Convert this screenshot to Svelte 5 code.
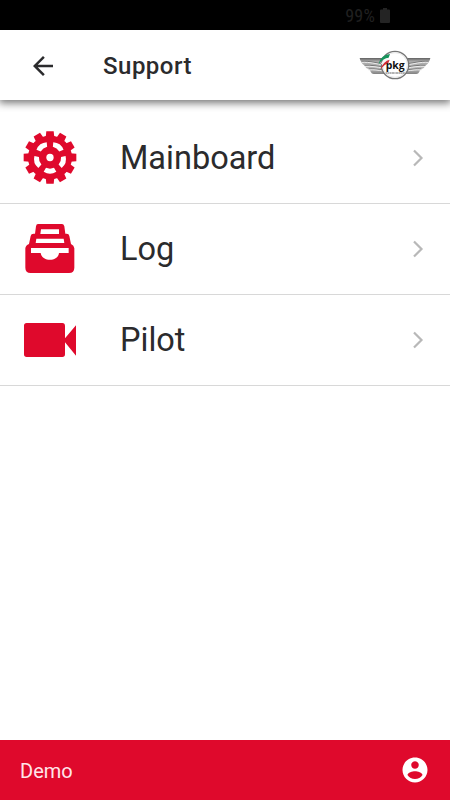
<script lang="ts">
  type Icon = 'gear' | 'archive' | 'video';

  interface MenuItem {
    icon: Icon;
    label: string;
  }

  const items: MenuItem[] = [
    { icon: 'gear', label: 'Mainboard' },
    { icon: 'archive', label: 'Log' },
    { icon: 'video', label: 'Pilot' },
  ];

  const teeth = Array.from({ length: 12 }, (_, i) => i * 30);
  const windows = [36, 108, 180, 252, 324];
</script>

<div class="screen">
  <div class="status">
    <span class="battery-level">99%</span>
    <svg class="battery" viewBox="0 0 10 15">
      <path d="M3 0h4v1.500h2q1 0 1 1V14q0 1-1 1H1q-1 0-1-1V2.500q0-1 1-1h2z" />
    </svg>
  </div>

  <header class="toolbar">
    <button class="back" aria-label="Back">
      <svg viewBox="0 0 24 24" width="30" height="30">
        <path d="M20 11H7.830l5.590-5.590L12 4l-8 8 8 8 1.410-1.410L7.830 13H20v-2z" />
      </svg>
    </button>
    <h1>Support</h1>

    <svg class="logo" viewBox="0 0 216 90">
      <defs>
        <linearGradient id="wing" x1="0" y1="0" x2="0" y2="1">
          <stop offset="0" stop-color="#606060" />
          <stop offset="0.2" stop-color="#a8a8a8" />
          <stop offset="0.7" stop-color="#b8b8b8" />
          <stop offset="1" stop-color="#808080" />
        </linearGradient>
      </defs>
      <g id="wing-left">
        <path class="wing" d="M2 24H75V72H44Q38 72 35 65L31 57Q21 57 18 48Q10 44 7 37Q3 31 2 24Z" />
        <path class="groove" d="M8 34C34 33 46 38 76 42M17 46C40 45 50 48 74 51M29 57C45 55 55 58 76 60" />
        <path class="feather" d="M8 37C34 36 46 41 76 45M17 49C40 48 50 51 74 54M29 60C45 58 55 61 76 63" />
      </g>
      <use href="#wing-left" transform="translate(216 0) scale(-1 1)" />
      <circle cx="108" cy="45" r="41" fill="#fff" stroke="#777" stroke-width="4" />
      <circle cx="108" cy="45" r="37" fill="none" stroke="#ddd" stroke-width="2" />
      <path d="M58 44Q64 15 93 12L89 23Q69 26 58 44Z" fill="#16945b" />
      <path d="M61 50Q70 27 91 23L88 31Q74 33 61 50Z" fill="#f5f5f5" />
      <path d="M64 58Q74 32 92 29L88 39Q76 43 64 58Z" fill="#d12c35" />
      <text class="brand" x="80" y="56" textLength="57" lengthAdjust="spacingAndGlyphs">pkg</text>
      <path d="M80 69H138" stroke="#666" stroke-width="3" stroke-dasharray="4 1 7 1" />
    </svg>
  </header>

  <main>
    {#each items as item}
      <button class="row">
        {#if item.icon === 'gear'}
          <svg class="icon" viewBox="-81 -79.500 162 162">
            {#each teeth as angle}
              <path d="M-13-60L-11-79H11L13-60Z" transform="rotate({angle})" />
            {/each}
            <circle r="66" />
            {#each windows as angle}
              <path class="hole" d="M-19-43Q0-55 19-43L12-31Q0-36-12-31Z" transform="rotate({angle})" />
            {/each}
            <circle class="hole" r="11" />
          </svg>
        {:else if item.icon === 'archive'}
          <svg class="icon" viewBox="24 21 162 162">
            <path d="M63 34Q64 27 69 27H141Q146 27 148 34L151 56H155Q162 56 163 63L168 87Q177 91 178 100V158Q178 174 162 174H47Q31 174 31 158V100Q32 91 42 87L47 63Q48 56 56 56H60Z" />
            <path class="hole" d="M78 43H132V57H76ZM64 71H146L148 84H62ZM48 99H161V114H132C130 141 80 141 77 114H48Z" />
          </svg>
        {:else}
          <svg class="icon" viewBox="24 -6 162 162">
            <path d="M35 24H142Q150 24 150 33V70L183 31V122L150 82V118Q150 126 142 126H35Q27 126 27 118V32Q27 24 35 24Z" />
          </svg>
        {/if}
        <span class="label">{item.label}</span>
        <svg class="chevron" viewBox="0 0 12 18">
          <path d="M2 1.500L9.500 9L2 16.500" />
        </svg>
      </button>
    {/each}
  </main>

  <footer>
    <span>Demo</span>
    <svg viewBox="0 0 24 24" width="30" height="30">
      <path d="M12 2C6.480 2 2 6.480 2 12s4.480 10 10 10 10-4.480 10-10S17.520 2 12 2zm0 3c1.660 0 3 1.340 3 3s-1.340 3-3 3-3-1.340-3-3 1.340-3 3-3zm0 14.200c-2.500 0-4.710-1.280-6-3.220.03-1.990 4-3.080 6-3.080 1.990 0 5.970 1.090 6 3.080-1.290 1.940-3.500 3.220-6 3.220z" />
    </svg>
  </footer>
</div>

<style>
  :global(body) { margin: 0; }

  .screen {
    display: flex;
    flex-direction: column;
    width: 450px;
    height: 800px;
    overflow: hidden;
    background: #fff;
    color: #2b2b2d;
    font-family: Roboto, sans-serif;
  }
  button {
    border: 0;
    background: none;
    padding: 0;
    color: inherit;
    font: inherit;
    text-align: left;
  }
  svg { display: block; flex-shrink: 0; }

  .status {
    display: flex;
    flex-shrink: 0;
    align-items: center;
    justify-content: flex-end;
    gap: 5px;
    box-sizing: border-box;
    height: 30px;
    padding-right: 60px;
    background: #000;
    color: #202020;
  }
  .battery-level {
    font-size: 18px;
    font-stretch: condensed;
    letter-spacing: 0.2px;
    line-height: 30px;
    padding-top: 2px;
  }
  .battery { width: 10px; height: 15px; fill: #242424; }

  /* ── Toolbar ── */
  .toolbar {
    display: flex;
    flex-shrink: 0;
    align-items: center;
    box-sizing: border-box;
    height: 70px;
    padding: 1px 19px 0 28px;
    box-shadow: 0 2px 8px 1px rgba(0, 0, 0, 0.55);
    clip-path: inset(0 0 -12px);
  }
  .back { width: 75px; fill: #2b2b2d; }
  h1 {
    flex: 1;
    margin: 0;
    font-size: 24px;
    font-weight: 500;
    letter-spacing: 0.5px;
  }
  .logo { width: 72px; height: 30px; margin-bottom: 2px; }
  .wing { fill: url(#wing); }
  .groove { fill: none; stroke: #777; stroke-width: 3; }
  .feather { fill: none; stroke: #ededed; stroke-width: 3; }
  .brand {
    font: bold 33px "Open Sans", sans-serif;
    fill: #111;
  }

  /* ── Menu ── */
  main { flex: 1; padding-top: 13px; }
  .row {
    display: flex;
    align-items: center;
    box-sizing: border-box;
    width: 100%;
    height: 91px;
    padding: 0 26.5px 0 23px;
    border-bottom: 1px solid #d8d8d8;
  }
  .icon {
    width: 54px;
    height: 54px;
    margin-right: 43px;
    fill: #df092c;
  }
  .hole { fill: #fff; }
  .label {
    flex: 1;
    font-size: 32.5px;
  }
  .chevron {
    width: 12px;
    height: 18px;
    fill: none;
    stroke: #b8b8b8;
    stroke-width: 2.200;
  }

  footer {
    display: flex;
    flex-shrink: 0;
    align-items: center;
    justify-content: space-between;
    box-sizing: border-box;
    height: 60px;
    padding: 0 20px;
    background: #df092c;
    color: #ffe5e9;
    font-size: 20px;
    fill: #fff;
  }
  footer span { padding-top: 1px; }
</style>
